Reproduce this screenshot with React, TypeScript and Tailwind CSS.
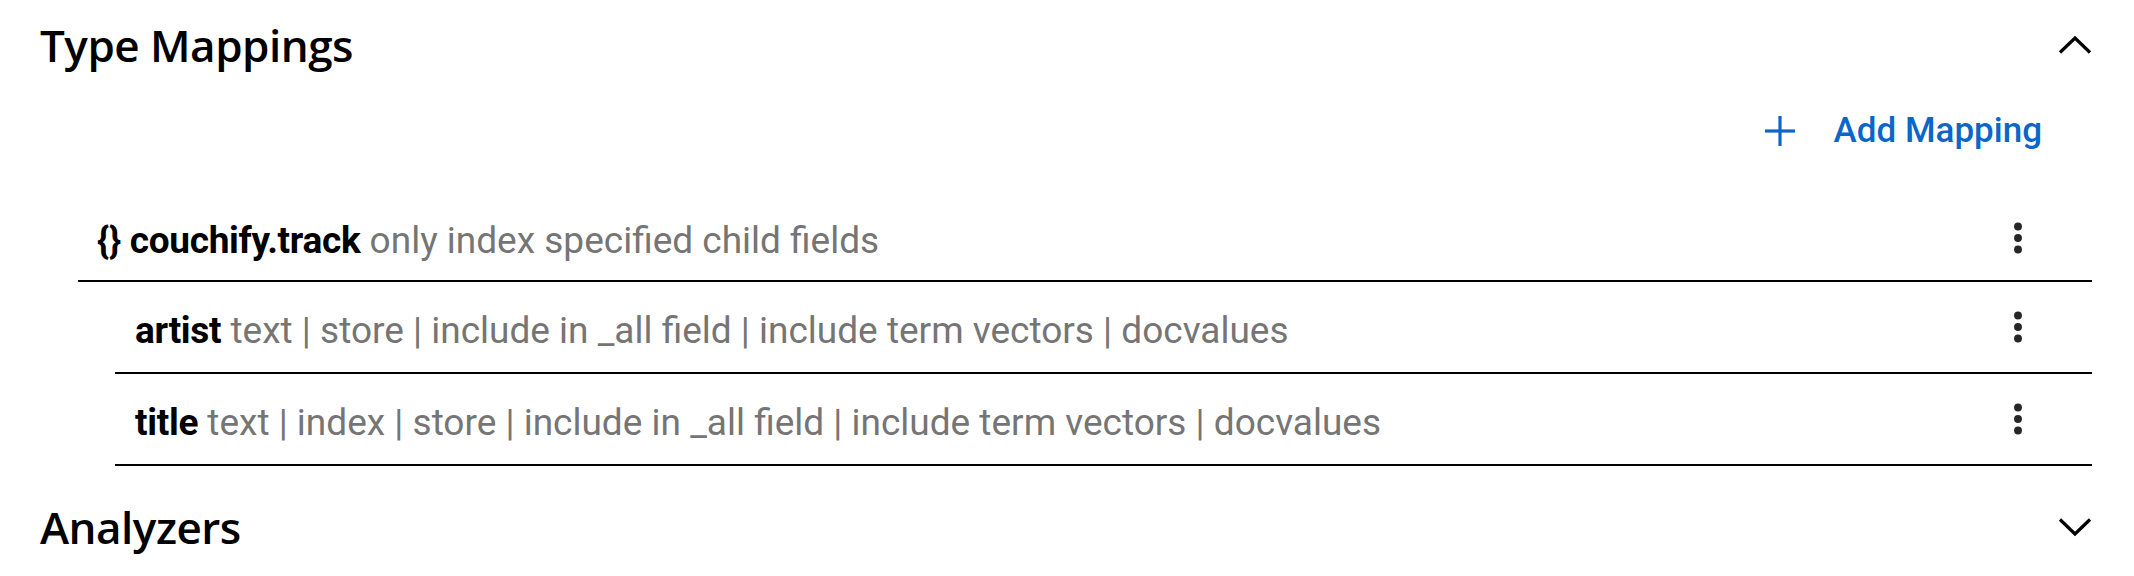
const fields = [
  {
    name: "artist",
    info: "text | store | include in _all field | include term vectors | docvalues",
  },
  {
    name: "title",
    info: "text | index | store | include in _all field | include term vectors | docvalues",
  },
];

function Chevron({ up }: { up?: boolean }) {
  return (
    <svg width="34" height="20" viewBox="0 0 34 20" fill="none" className="text-black">
      <polyline
        points={up ? "2,17.5 17,3 32,17.5" : "2,2.5 17,17 32,2.5"}
        stroke="currentColor"
        strokeWidth="3.2"
      />
    </svg>
  );
}

function Kebab() {
  return (
    <button className="flex h-[46px] w-[46px] items-center justify-center text-[#262626]">
      <svg width="46" height="46" viewBox="0 0 24 24" fill="currentColor">
        <circle cx="12" cy="6" r="2.05" />
        <circle cx="12" cy="12" r="2.05" />
        <circle cx="12" cy="18" r="2.05" />
      </svg>
    </button>
  );
}

function SectionHeader({ title, open }: { title: string; open?: boolean }) {
  return (
    <div className="flex h-[90px] items-center justify-between">
      <h2 className="font-['Open_Sans',sans-serif] text-[44px] font-semibold tracking-[-0.5px] text-black">
        {title}
      </h2>
      <Chevron up={open} />
    </div>
  );
}

export default function App() {
  return (
    <main className="min-h-screen bg-white pl-[40px] pr-[42px] font-['Roboto',sans-serif] text-[37px]">
      <SectionHeader title="Type Mappings" open />

      <div className="flex h-[82px] items-center justify-end pr-[50px]">
        <button className="flex items-center gap-[38px] text-[35px] font-medium text-[#0a66c9]">
          <svg width="32" height="32" viewBox="0 0 32 32" stroke="currentColor" strokeWidth="3.2">
            <line x1="16" y1="1" x2="16" y2="31" />
            <line x1="1" y1="16" x2="31" y2="16" />
          </svg>
          Add Mapping
        </button>
      </div>

      <div className="ml-[38px] mt-[24px]">
        <div className="flex h-[86px] items-center justify-between border-b-2 border-black pl-[19px] pr-[51px]">
          <p className="pt-[4px] leading-none">
            <span className="font-bold tracking-[-0.3px] text-black">{"{}"} couchify.track</span>{" "}
            <span className="text-[#757575]">only index specified child fields</span>
          </p>
          <Kebab />
        </div>

        <div className="ml-[37px]">
          {fields.map((f) => (
            <div
              key={f.name}
              className="flex h-[92px] items-center justify-between border-b-2 border-black pl-[20px] pr-[51px]"
            >
              <p className="pt-[6px] leading-none">
                <span className="font-bold tracking-[-0.3px] text-black">{f.name}</span>{" "}
                <span className="text-[#757575]">{f.info}</span>
              </p>
              <Kebab />
            </div>
          ))}
        </div>
      </div>

      <div className="mt-[16px]">
        <SectionHeader title="Analyzers" />
      </div>
    </main>
  );
}
